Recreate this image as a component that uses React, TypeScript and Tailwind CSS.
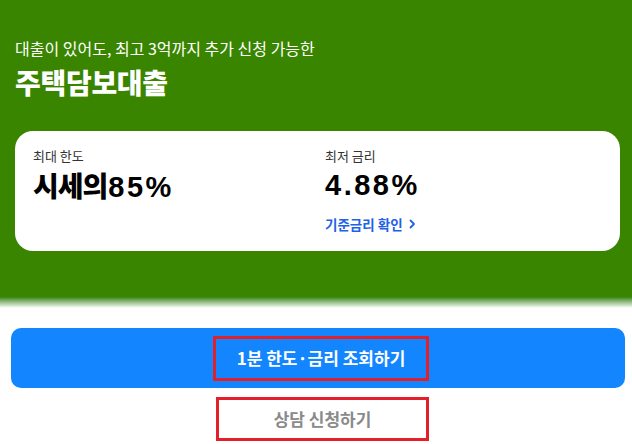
import React from "react";

export default function App() {
  const font = {
    fontFamily: '"Liberation Sans", "Noto Sans CJK KR", sans-serif',
  };
  return (
    <div className="w-full min-h-screen bg-white" style={font}>
      <section className="bg-[#398500] pt-[37px] pb-[46px] pl-[15px] pr-[12px]">
        <p className="text-[16px] leading-[23px] tracking-[0px] text-white font-['Noto_Sans_CJK_KR',sans-serif]">
          대출이 있어도, 최고 3억까지 추가 신청 가능한
        </p>
        <h1 className="mt-[4px] text-[28px] leading-[36px] tracking-[-0.3px] font-black text-white font-['Noto_Sans_CJK_KR',sans-serif]">
          주택담보대출
        </h1>
        <div className="mt-[31px] h-[120px] rounded-[18px] bg-white flex pt-[16px] pl-[18px]">
          <div className="w-[292px]">
            <div className="text-[13px] leading-[18px] text-[#333] font-['Noto_Sans_CJK_KR',sans-serif]">
              최대 한도
            </div>
            <div className="mt-[3px] h-[34px] flex items-baseline text-black">
              <span className="text-[28px] leading-[34px] tracking-[-1px] font-black font-['Noto_Sans_CJK_KR',sans-serif]">
                시세의
              </span>
              <span className="ml-[1px] text-[29px] leading-[34px] tracking-[2.5px] font-bold font-['Liberation_Sans',sans-serif]">
                85%
              </span>
            </div>
          </div>
          <div>
            <div className="text-[13px] leading-[18px] text-[#333] font-['Noto_Sans_CJK_KR',sans-serif]">
              최저 금리
            </div>
            <div className="mt-[3px] h-[34px] text-[29px] leading-[34px] tracking-[2.5px] font-bold text-black font-['Liberation_Sans',sans-serif]">
              4.88%
            </div>
            <div className="mt-[13px] flex items-center gap-[6px] text-[13.5px] leading-[18px] font-bold text-[#1e62e6] font-['Noto_Sans_CJK_KR',sans-serif]">
              <span>기준금리 확인</span>
              <svg width="7" height="10" viewBox="0 0 7 10" fill="none">
                <path d="M1.5 1.5L5 5L1.5 8.5" stroke="#1e62e6" strokeWidth="1.8" strokeLinecap="round" strokeLinejoin="round" />
              </svg>
            </div>
          </div>
        </div>
      </section>
      <div className="h-[11px] bg-gradient-to-b from-[#398500] to-white" />
      <div className="pt-[20px] pl-[11px] pr-[7px]">
        <button className="w-full h-[60px] rounded-[10px] bg-[#1285ff] flex items-center justify-center pl-[6px]">
          <span className="w-[216px] h-[45px] border-[3px] border-[#e3202a] flex items-center justify-center text-[17px] font-bold text-white font-['Noto_Sans_CJK_KR',sans-serif]">
            1분 한도·금리 조회하기
          </span>
        </button>
      </div>
      <div className="mt-[9px] flex justify-center pl-[13px]">
        <span className="w-[213px] h-[44px] border-[3px] border-[#e3202a] flex items-center justify-center text-[17px] font-bold text-[#8a8a8a] font-['Noto_Sans_CJK_KR',sans-serif]">
          상담 신청하기
        </span>
      </div>
    </div>
  );
}
